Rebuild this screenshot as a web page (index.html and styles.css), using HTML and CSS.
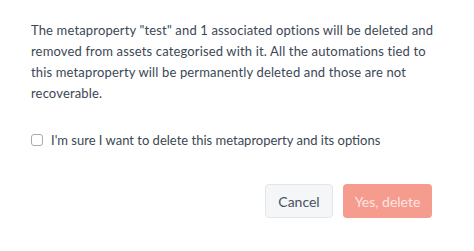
FILE: index.html
```html
<!DOCTYPE html>
<html lang="en">
<head>
    <meta charset="UTF-8">
    <meta name="viewport" content="width=device-width, initial-scale=1.0">
    <title>Delete metaproperty</title>
    <link rel="stylesheet" href="styles.css">
</head>
<body>
    <div class="dialog">
        <p class="message">
            The metaproperty "test" and 1 associated options will be deleted and
            removed from assets categorised with it. All the automations tied to
            this metaproperty will be permanently deleted and those are not
            recoverable.
        </p>

        <label class="confirm">
            <span class="checkbox"></span>
            <span>I'm sure I want to delete this metaproperty and its options</span>
        </label>

        <div class="actions">
            <div class="button secondary">Cancel</div>
            <div class="button danger">Yes, delete</div>
        </div>
    </div>
</body>
</html>
```

FILE: styles.css
```css
body {
    margin: 0;
    padding: 0;
    background-color: #ffffff;
    font-family: 'Lato', 'Open Sans', sans-serif;
    color: #3b4754;
}

.dialog {
    padding: 20px 42px 33px 31px;
}

.message {
    margin: 0;
    font-size: 13px;
    line-height: 21px;
    letter-spacing: 0.15px;
    width: 405px;
}

.confirm {
    display: flex;
    align-items: center;
    gap: 8px;
    margin-top: 26px;
    font-size: 13px;
    line-height: 20px;
}

.checkbox {
    width: 10px;
    height: 10px;
    border: 1.5px solid #a3acb5;
    border-radius: 3px;
    background-color: #ffffff;
}

.actions {
    display: flex;
    justify-content: flex-end;
    gap: 10px;
    margin-top: 34px;
}

.button {
    height: 34px;
    box-sizing: border-box;
    display: flex;
    align-items: center;
    justify-content: center;
    border-radius: 4px;
    font-size: 14px;
}

.secondary {
    width: 68px;
    background-color: #f4f6f8;
    border: 1px solid #e2e6ea;
    color: #46525e;
}

.danger {
    width: 89px;
    background-color: #f69c8f;
    color: #fde5e1;
}
```
